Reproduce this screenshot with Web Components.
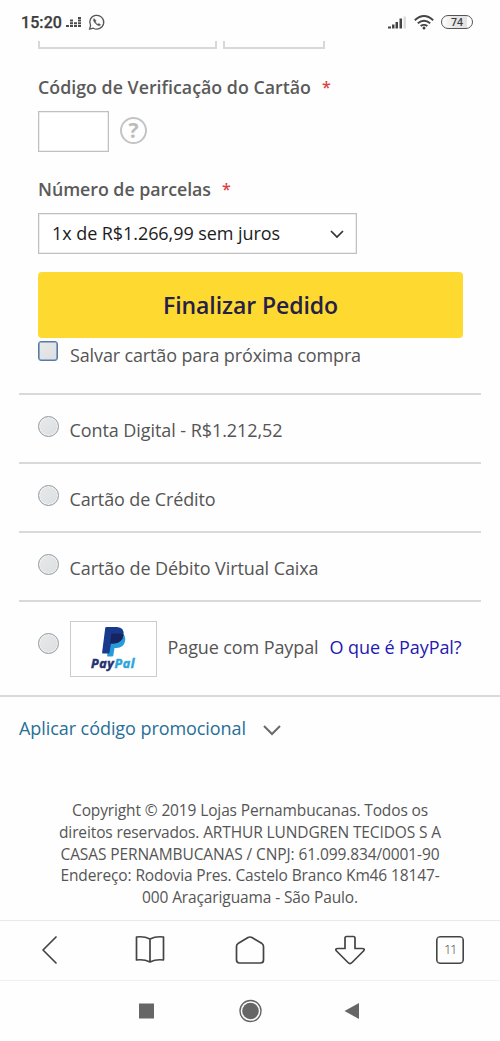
<!DOCTYPE html>
<html lang="pt-BR">
<head>
<meta charset="utf-8">
<title>Finalizar Pedido</title>
<style>
html,body{margin:0;background:#fefefe}
body{width:500px;height:1041px;overflow:hidden;font-family:"Open Sans","Noto Sans",sans-serif;color:#555}
</style>
</head>
<body>
<checkout-screen></checkout-screen>
<script>
const define=(name,html,setup)=>customElements.define(name,class extends HTMLElement{
  connectedCallback(){
    if(this.shadowRoot)return;
    const t=document.createElement('template');
    t.innerHTML=html;
    this.attachShadow({mode:'open'}).append(t.content.cloneNode(true));
    if(setup)setup(this,this.shadowRoot);
  }
});

/* One line of text, tracked so that it spans the given width. */
define('fit-text',`<style>:host{display:block;white-space:nowrap}span{display:inline-block}</style><span><slot></slot></span>`,(el,root)=>{
  const s=root.querySelector('span'),w=+el.getAttribute('width');
  el.style.width=w+'px';
  s.style.letterSpacing=(w-s.getBoundingClientRect().width)/el.textContent.length+'px';
});

define('status-bar',`<style>
:host{display:flex;height:41px;box-sizing:border-box;padding:3px 27px 0 21px;align-items:center;color:#3c3c3c}
.time{font:500 16px/20px Roboto,sans-serif;-webkit-text-stroke:.25px;margin-top:1px}
svg{display:block}.eq{margin:1px 0 0 4px}.wa{margin-left:6px}.sig{margin:0 0 0 auto}.wifi{margin:0 0 0 7px}
.bat{margin:-1px 0 0 7px;width:32px;height:14px;box-sizing:border-box;border:1.6px solid #555;border-radius:8px;font:600 10.500px/12px "Open Sans",sans-serif;text-align:center;background:linear-gradient(90deg,#fff 0,#e4e4e4 45%,#e4e4e4 82%,#fff 84%)}
</style>
<fit-text class="time" width="41">15:20</fit-text>
<svg class="eq" width="16" height="11"><g fill="#4a4a4a"><path d="M0 8h3v2H0zM4 8h3v2H4zM4 5.2h3v2H4zM4 2.6h3v2H4zM8 8h3v2H8zM8 5.2h3v2H8zM12 8h3v2h-3zM12 5.2h3v2h-3zM12 2.6h3v2h-3zM12 0h3v2h-3z"/></g></svg>
<svg class="wa" width="18" height="17" viewBox="0 0 18 17" fill="none" stroke="#555" stroke-width="1.3"><path d="M1.6 15.2l1-3.7A7 6.9 0 1 1 5.300 14.200z"/><path d="M6 4.400C5 5.200 5.200 7 7.200 9.300s4.500 3.200 5.500 1.500l-1.900-1.400-1 .8c-1.200-.5-2-1.400-2.400-2.500l.8-.9z" fill="#555" stroke-width=".4"/></svg>
<svg class="sig" width="19" height="13"><path d="M0 10.500h3v2H0zM4 8.500h2.500v4H4zM7.500 6h2.500v6.500H7.500zM11.500 2.500h2.500v10h-2.500z" fill="#444"/><path d="M15.500 0.500h2.500v12h-2.500z" fill="#ddd"/></svg>
<svg class="wifi" width="20" height="15" fill="none" stroke="#444" stroke-width="1.900"><path d="M.8 5.200Q10-3 19.200 5.200M3.800 8.300q6.200-5.200 12.400 0M6.600 11.100q3.400-2.500 6.800 0"/><circle cx="10" cy="13" r="1.500" fill="#444" stroke="none"/></svg>
<div class="bat">74</div>`);

define('clipped-fields',`<style>
:host{display:flex;gap:6px;height:9px;padding-left:38px}
i{height:8px;box-sizing:border-box;border:2px solid #d8d8d8;border-top:0}
.number{width:179px}.year{width:102px}
</style><i class="number"></i><i class="year"></i>`);

define('field-label',`<style>
:host{display:flex;gap:11px;font-weight:600;font-size:17.800px;line-height:24px;color:#5a5a5a}
b{font-weight:600;color:#d9433f;font-size:16px}
</style><slot></slot><b>*</b>`);

define('code-field',`<style>
:host{display:flex;align-items:center;gap:11px;height:41px}
.box{width:71px;height:41px;box-sizing:border-box;border:1.500px solid #c0c0c0;box-shadow:inset 0 0 0 .5px #ddd;background:#fff}
.help{width:27px;height:27px;margin-top:-2px;box-sizing:border-box;border:2px solid #c4c4c4;border-radius:50%;font:700 21px/23px "Open Sans",sans-serif;text-align:center;color:#bcbcbc}
</style><div class="box"></div><div class="help">?</div>`);

define('select-field',`<style>
:host{display:flex;align-items:center;justify-content:space-between;box-sizing:border-box;width:319px;height:41px;border:1.500px solid #c0c0c0;box-shadow:inset 0 0 0 .5px #ddd;padding:0 12px 1px 13px;background:#fff;color:#1c1c1c;font-size:18px}
svg{margin-top:3px}
</style><slot></slot><svg width="14" height="9" fill="none" stroke="#333" stroke-width="1.700"><path d="M1 1l6 6 6-6"/></svg>`);

define('primary-button',`<style>
:host{display:flex;align-items:center;justify-content:center;width:425px;height:66px;border-radius:4px;background:#fed92f;color:#25204a;font-weight:600;font-size:23px;line-height:30px}
</style><slot></slot>`);

define('choice-mark',`<style>
:host{display:block;flex:none;box-sizing:border-box;width:21px;height:21px;border:1px solid #8d9aa3;border-radius:50%;background:linear-gradient(135deg,#e9e9e9,#dcdee0);box-shadow:inset 0 0 0 1px #f0f1f2}
:host([square]){width:20px;height:20px;border:1.600px solid #557ca9;border-radius:3px;box-shadow:inset 0 0 0 .6px #557ca9}
</style>`);

define('save-card',`<style>
:host{display:flex;gap:12px;height:55px;padding:3px 0 0 38px;box-sizing:border-box}
fit-text{margin-top:2px;line-height:24px}
</style><choice-mark square></choice-mark><fit-text width="291">Salvar cartão para próxima compra</fit-text>`);

define('payment-option',`<style>
:host{display:flex;box-sizing:border-box;height:69px;margin:0 19px;padding:21px 0 0 19px;border-top:2px solid #d9d9d9;line-height:24px}
.body{margin:2px 0 0 10.500px}
:host([tall]){height:95px;padding-top:19px}
:host([tall]) choice-mark{margin-top:12px}
:host([tall]) .body{margin-top:0;display:flex}
</style><choice-mark></choice-mark><div class="body"><slot></slot></div>`);

define('paypal-badge',`<style>
:host{display:flex;flex-direction:column;align-items:center;box-sizing:border-box;width:87px;height:56px;margin-right:11px;border:1.500px solid #ccc;background:#fff;padding-top:4px}
svg{display:block}.name{font:italic 700 12.500px/16px "Open Sans",sans-serif;color:#24306f;-webkit-text-stroke:.5px;margin-top:-1px}.name span{color:#2ba4dc}
</style>
<svg width="28" height="31" viewBox="0 0 28 31"><path d="M12 7h11q4 2 3 8.500Q24.500 22 17.500 22h-2l-1.200 7.500q-.2 1-1.200 1H9q-1 0-.9-1z" fill="#259bd9"/><path d="M7.500 1H18q7.500.5 6.500 8-1.500 8.500-10 8.500H12l-1.500 9q-.2 1-1.200 1H4q-1 0-.9-1L6.200 2.200Q6.400 1 7.500 1z" fill="#173a8c"/><path d="M12.500 7.500h9.500l2.500 1.500q-1.500 8.500-10 8.500H11z" fill="#17245f"/></svg>
<fit-text class="name" width="44">Pay<span>Pal</span></fit-text>`);

define('promo-toggle',`<style>
:host{display:flex;align-items:center;gap:17px;border-top:2px solid #d9d9d9;height:64px;padding-left:19px;color:#276f98;font-size:18px;line-height:24px}
fit-text{margin-top:-2px}svg{margin-top:3px}
</style><fit-text width="227">Aplicar código promocional</fit-text><svg width="18" height="11" fill="none" stroke="#6a6a6a" stroke-width="2"><path d="M1 1l8 8 8-8"/></svg>`);

define('legal-notice',`<style>
:host{display:flex;flex-direction:column;align-items:center;height:120px;padding-top:39px;font-size:15.500px;line-height:21.800px}
</style>
<fit-text width="356">Copyright © 2019 Lojas Pernambucanas. Todos os</fit-text>
<fit-text width="382">direitos reservados. ARTHUR LUNDGREN TECIDOS S A</fit-text>
<fit-text width="379">CASAS PERNAMBUCANAS / CNPJ: 61.099.834/0001-90</fit-text>
<fit-text width="379">Endereço: Rodovia Pres. Castelo Branco Km46 18147-</fit-text>
<fit-text width="216">000 Araçariguama - São Paulo.</fit-text>`);

define('browser-bar',`<style>
:host{display:grid;grid-template-columns:repeat(5,100px);place-items:center;box-sizing:border-box;height:60px;border-top:1px solid #e9e9e9;padding-bottom:1px}
svg{display:block;fill:none;stroke:#444;stroke-width:1.700;stroke-linejoin:round;stroke-linecap:round}
.tabs{width:28px;height:28px;box-sizing:border-box;border:1px solid #444;box-shadow:inset 0 0 0 .6px #444;border-radius:4px;text-align:center;font:300 13px/25px "Open Sans",sans-serif;letter-spacing:-1.500px;color:#444}
</style>
<svg width="32" height="30"><path d="M22 2L9 15l13 13"/></svg>
<svg width="32" height="30"><path d="M16 4Q10 1 2.500 2v23q7.500-1 13.500 2 6-3 13.500-2V2Q22 1 16 4v23"/></svg>
<svg width="32" height="30"><path d="M16 2q1 0 2 .6l10 6q1.500 1 1.500 3V25q0 3-3 3h-21q-3 0-3-3V11.600q0-2 1.500-3l10-6q1-.6 2-.6z"/></svg>
<svg width="32" height="30"><path d="M12.500 1.500h7q1.500 0 1.500 2v10h7q3.500 0 1.500 2.500L18 27.500q-2 2-4 0L2.500 16Q.5 13.500 4 13.500h7v-10q0-2 1.500-2z"/></svg>
<div class="tabs">11</div>`);

define('system-bar',`<style>
:host{display:flex;justify-content:center;align-items:center;box-sizing:border-box;height:61px;border-top:1px solid #f0f0f0}
svg{display:block}
</style><svg width="240" height="24" fill="#666"><path d="M9 4.500h15v15H9zM229 4v16l-14.500-8z"/><circle cx="120.500" cy="12" r="8.300"/><circle cx="120.500" cy="12" r="10.500" fill="none" stroke="#666" stroke-width="1.400"/></svg>`);

define('checkout-screen',`<style>
:host{display:block;width:500px;height:1041px;background:#fefefe;font-size:18px}
.form{padding-left:38px;display:flex;flex-direction:column}
.code{margin-top:12px}.two{margin-top:25px}select-field{margin-top:12px}primary-button{margin-top:18px}
.form .one{margin-top:25px}
.link{color:#2419b2;margin-left:11px}
.pp{margin-top:14px}
</style>
<status-bar></status-bar>
<clipped-fields></clipped-fields>
<div class="form">
<field-label class="one"><fit-text width="273">Código de Verificação do Cartão</fit-text></field-label>
<code-field class="code"></code-field>
<field-label class="two"><fit-text width="173">Número de parcelas</fit-text></field-label>
<select-field><fit-text width="228">1x de R$1.266,99 sem juros</fit-text></select-field>
<primary-button><fit-text width="175">Finalizar Pedido</fit-text></primary-button>
</div>
<save-card></save-card>
<payment-option><fit-text width="213">Conta Digital - R$1.212,52</fit-text></payment-option>
<payment-option><fit-text width="146">Cartão de Crédito</fit-text></payment-option>
<payment-option><fit-text width="249">Cartão de Débito Virtual Caixa</fit-text></payment-option>
<payment-option tall><paypal-badge></paypal-badge><fit-text class="pp" width="151">Pague com Paypal</fit-text><fit-text class="pp link" width="132">O que é PayPal?</fit-text></payment-option>
<promo-toggle></promo-toggle>
<legal-notice></legal-notice>
<browser-bar></browser-bar>
<system-bar></system-bar>`);
</script>
</body>
</html>
